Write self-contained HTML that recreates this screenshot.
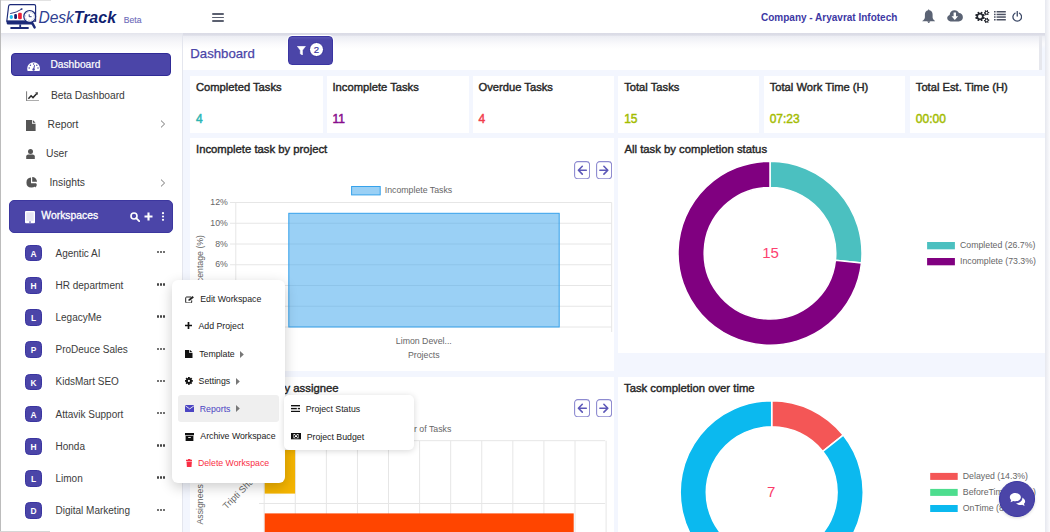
<!DOCTYPE html>
<html><head><meta charset="utf-8">
<style>
*{margin:0;padding:0;box-sizing:border-box}
html,body{width:1050px;height:532px;overflow:hidden;background:#fff;font-family:"Liberation Sans",sans-serif}
.a{position:absolute}
.t{position:absolute;white-space:nowrap;line-height:1}
#content{position:absolute;left:183px;top:33px;width:862px;height:499px;background:#f3f6fe}
.card{position:absolute;background:#fff}
.ct{position:absolute;white-space:nowrap;line-height:1;font-size:11.2px;color:#262626;-webkit-text-stroke:0.4px #262626}
.cv{position:absolute;white-space:nowrap;line-height:1;font-size:12px;-webkit-text-stroke:0.45px currentColor}
.side-t{position:absolute;white-space:nowrap;line-height:1;font-size:10.3px;color:#3a3a3a}
.av{position:absolute;left:25.2px;width:16.5px;height:16.5px;border-radius:4.5px;background:#4b45a8;border:0.8px solid #3a35a0;color:#fff;font-size:8.4px;font-weight:bold;text-align:center;line-height:17px}
.wt{position:absolute;left:55.5px;white-space:nowrap;line-height:1;font-size:10px;color:#3c3c3c}
.dots{position:absolute;left:156.5px;width:9px;height:3px}
.dots i{position:absolute;top:0;width:2.4px;height:2.4px;background:#444;border-radius:50%}
.mi{position:absolute;white-space:nowrap;line-height:1;font-size:8.75px;color:#222}
.lbl{position:absolute;white-space:nowrap;line-height:1;font-size:8.75px;color:#666}
.arrbtn{position:absolute;width:16px;height:18px;border:1.2px solid #8a86cc;border-radius:3px;background:#fff}
</style></head><body>

<!-- content background -->
<div id="content"></div>

<!-- header -->
<div class="a" style="left:0;top:0;width:1050px;height:33px;background:#fff;box-shadow:0 2px 4px rgba(40,40,80,0.10)"></div>
<div class="a" style="left:0;top:0;width:51px;height:1px;background:#e2e2e2"></div>

<div class="a" style="left:0;top:33px;width:183px;height:499px;background:#fff"></div>
<div class="a" style="left:1px;top:33px;width:181px;height:18px;background:linear-gradient(#e3e4ec,#eeeff4 4px,#f6f6f9 9px,rgba(255,255,255,0))"></div>
<div class="a" style="left:182px;top:33px;width:1px;height:499px;background:#e4e6ee"></div>
<div class="a" style="left:0;top:0;width:1px;height:532px;background:#bcbcbc"></div>
<div class="a" style="left:0;top:531px;width:50px;height:1px;background:#d6d6d6"></div>
<div class="a" style="left:11px;top:52.5px;width:159.8px;height:23px;border-radius:4px;background:#4b45a8;border:1px solid #302b96"></div>
<svg class="a" style="left:26.6px;top:61.6px" width="13.2" height="9.2" viewBox="0 0 13.2 9.2"><path d="M6.6 0.2A6.4 6.4 0 0 0 0.2 6.6c0 .9.2 1.8.5 2.6h11.8c.3-.8.5-1.7.5-2.6A6.4 6.4 0 0 0 6.6 0.2z" fill="#fff"/><circle cx="6.6" cy="2.1" r=".75" fill="#4b45a8"/><circle cx="3.4" cy="3.3" r=".75" fill="#4b45a8"/><circle cx="9.8" cy="3.3" r=".75" fill="#4b45a8"/><circle cx="2.2" cy="6.1" r=".75" fill="#4b45a8"/><circle cx="11" cy="6.1" r=".75" fill="#4b45a8"/><path d="M6.6 7.6L7.6 3.2" stroke="#4b45a8" stroke-width="1"/><circle cx="6.6" cy="7.5" r="1.2" fill="#4b45a8"/></svg>
<div class="t" style="left:50.5px;top:59.5px;font-size:10.2px;color:#fff;-webkit-text-stroke:0.2px #fff">Dashboard</div>
<svg class="a" style="left:26px;top:90.5px" width="13.2" height="10.5" viewBox="0 0 13.2 10.5"><path d="M0.6 0.3V9.9H13" fill="none" stroke="#777" stroke-width="1"/><path d="M2.4 7.8L5.1 4.8L7 6.6L10.6 2.8" fill="none" stroke="#2a2a2a" stroke-width="1.5"/><path d="M9.2 1.6L11.9 1.2L11.6 4z" fill="#2a2a2a"/></svg>
<div class="t side-t" style="left:51px;top:90.6px;letter-spacing:-0.05px">Beta Dashboard</div>
<svg class="a" style="left:25.8px;top:119.5px" width="10" height="11" viewBox="0 0 10 11"><path d="M0 0H6V3.8H9.6V11H0z" fill="#555"/><path d="M6.8 0L9.6 2.8H6.8z" fill="#555"/></svg>
<div class="t side-t" style="left:47.5px;top:119.6px">Report</div>
<svg class="a" style="left:160px;top:120px" width="6" height="8" viewBox="0 0 6 8"><path d="M1 0.6L4.6 4L1 7.4" fill="none" stroke="#777" stroke-width="1"/></svg>
<svg class="a" style="left:25.8px;top:148.8px" width="9" height="10" viewBox="0 0 9 10"><circle cx="4.5" cy="2.6" r="2.5" fill="#555"/><path d="M0.2 10V7.6C0.2 6.3 1.2 5.6 2.4 5.6H6.6C7.8 5.6 8.8 6.3 8.8 7.6V10z" fill="#555"/></svg>
<div class="t side-t" style="left:46px;top:148.9px">User</div>
<svg class="a" style="left:25.5px;top:177px" width="12" height="11" viewBox="0 0 12 11"><path d="M5 0.6A5 5 0 1 0 10.4 6.2H5z" fill="#555"/><path d="M6.2 0A4.8 4.8 0 0 1 11 4.8H6.2z" fill="#555"/><path d="M6.8 7.2H11A4.8 4.8 0 0 1 9.3 10.4z" fill="#555"/></svg>
<div class="t side-t" style="left:49.5px;top:178.3px">Insights</div>
<svg class="a" style="left:160px;top:178.5px" width="6" height="8" viewBox="0 0 6 8"><path d="M1 0.6L4.6 4L1 7.4" fill="none" stroke="#777" stroke-width="1"/></svg>
<div class="a" style="left:9.3px;top:199.8px;width:163.4px;height:32.9px;border-radius:5px;background:#4b45a8;border:0.8px solid #3c379f"></div>
<svg class="a" style="left:25.2px;top:211.3px" width="10" height="12.3" viewBox="0 0 10 12.3"><rect x="0" y="0" width="10" height="12.3" rx="1" fill="#fff"/><rect x="1.3" y="1.3" width="7.4" height="8.6" fill="#e6e5f4"/><rect x="4" y="10.6" width="2" height=".9" fill="#4b45a8"/></svg>
<div class="t" style="left:41.3px;top:211.4px;font-size:10.4px;color:#fff;-webkit-text-stroke:0.3px #fff">Workspaces</div>
<svg class="a" style="left:129.5px;top:212px" width="10" height="10" viewBox="0 0 10 10"><circle cx="4" cy="4" r="3" fill="none" stroke="#fff" stroke-width="1.6"/><path d="M6.2 6.2L9.2 9.2" stroke="#fff" stroke-width="1.8" stroke-linecap="round"/></svg>
<svg class="a" style="left:144.2px;top:212.2px" width="9" height="9" viewBox="0 0 9 9"><path d="M4.5 0.5V8.5M0.5 4.5H8.5" stroke="#fff" stroke-width="2.1"/></svg>
<svg class="a" style="left:161px;top:212px" width="4" height="9" viewBox="0 0 4 9"><circle cx="2" cy="1.2" r="1.1" fill="#fff"/><circle cx="2" cy="4.5" r="1.1" fill="#fff"/><circle cx="2" cy="7.8" r="1.1" fill="#fff"/></svg>
<div class="av" style="top:244.8px">A</div>
<div class="wt" style="top:248.6px">Agentic AI</div>
<div class="dots" style="top:251.0px"><i style="left:0"></i><i style="left:3.3px"></i><i style="left:6.6px"></i></div>
<div class="av" style="top:277.0px">H</div>
<div class="wt" style="top:280.8px">HR department</div>
<div class="dots" style="top:283.2px"><i style="left:0"></i><i style="left:3.3px"></i><i style="left:6.6px"></i></div>
<div class="av" style="top:309.2px">L</div>
<div class="wt" style="top:313.0px">LegacyMe</div>
<div class="dots" style="top:315.4px"><i style="left:0"></i><i style="left:3.3px"></i><i style="left:6.6px"></i></div>
<div class="av" style="top:341.4px">P</div>
<div class="wt" style="top:345.2px">ProDeuce Sales</div>
<div class="dots" style="top:347.6px"><i style="left:0"></i><i style="left:3.3px"></i><i style="left:6.6px"></i></div>
<div class="av" style="top:373.6px">K</div>
<div class="wt" style="top:377.4px">KidsMart SEO</div>
<div class="dots" style="top:379.8px"><i style="left:0"></i><i style="left:3.3px"></i><i style="left:6.6px"></i></div>
<div class="av" style="top:405.8px">A</div>
<div class="wt" style="top:409.6px">Attavik Support</div>
<div class="dots" style="top:412.0px"><i style="left:0"></i><i style="left:3.3px"></i><i style="left:6.6px"></i></div>
<div class="av" style="top:438.0px">H</div>
<div class="wt" style="top:441.8px">Honda</div>
<div class="dots" style="top:444.2px"><i style="left:0"></i><i style="left:3.3px"></i><i style="left:6.6px"></i></div>
<div class="av" style="top:470.2px">L</div>
<div class="wt" style="top:474.0px">Limon</div>
<div class="dots" style="top:476.4px"><i style="left:0"></i><i style="left:3.3px"></i><i style="left:6.6px"></i></div>
<div class="av" style="top:502.4px">D</div>
<div class="wt" style="top:506.2px">Digital Marketing</div>
<div class="dots" style="top:508.6px"><i style="left:0"></i><i style="left:3.3px"></i><i style="left:6.6px"></i></div>
<svg class="a" style="left:5px;top:3px" width="32" height="27" viewBox="5 3 32 27">
<path d="M10.4 4.6H34.2A1.5 1.5 0 0 1 35.6 6.1V21.2H6.8L8.6 6.1A1.8 1.8 0 0 1 10.4 4.6z" fill="#fff" stroke="#1c2a78" stroke-width="1.15"/>
<path d="M6.6 20.6H33V24.6H8.2A1.6 1.6 0 0 1 6.6 23z" fill="#1c2a78"/>
<rect x="19.3" y="24.4" width="1.8" height="2.9" fill="#1c2a78"/>
<rect x="10.2" y="27" width="18.7" height="1.9" rx=".9" fill="#1c2a78"/>
<path d="M10.2 13.6Q16.5 12.6 21.2 9.4" fill="none" stroke="#1c2a78" stroke-width="0.9"/>
<ellipse cx="21.6" cy="9.1" rx="1.1" ry=".8" fill="#1c2a78"/>
<ellipse cx="11.3" cy="17" rx="1.7" ry="1.9" fill="#1fbdf2"/>
<rect x="14.2" y="14.1" width="2.8" height="4.9" rx="1.3" fill="#1a1f6e"/>
<rect x="18.1" y="12.7" width="3.7" height="6.5" rx="1.3" fill="#ec2238"/>
<path d="M32 22.6L34.6 27.4" stroke="#1c2a78" stroke-width="2.4" stroke-linecap="round"/>
<circle cx="29.7" cy="16.4" r="5.9" fill="#fff" stroke="#1c2a78" stroke-width="1.2"/>
<circle cx="29.7" cy="16.4" r="4.4" fill="none" stroke="#1c2a78" stroke-width="0.45" stroke-dasharray="0.5 1.1"/>
<path d="M29.2 14.3V16.7H31.6" fill="none" stroke="#1c2a78" stroke-width="0.9"/>
</svg>
<div class="t" style="left:38.5px;top:10px;font-size:15.6px;font-style:italic;color:#2f3f92;letter-spacing:-0.1px">Desk<b style="color:#101f70;font-size:16px;letter-spacing:0">Track</b></div>
<div class="t" style="left:123.8px;top:16px;font-size:8.6px;color:#6b69b9;-webkit-text-stroke:0.1px #6b69b9">Beta</div>
<div class="a" style="left:211.5px;top:13.05px;width:12px;height:1.5px;background:#5b6070;border-radius:1px"></div>
<div class="a" style="left:211.5px;top:16.65px;width:12px;height:1.5px;background:#5b6070;border-radius:1px"></div>
<div class="a" style="left:211.5px;top:20.35px;width:12px;height:1.5px;background:#5b6070;border-radius:1px"></div>
<div class="t" style="left:761px;top:13px;font-size:10px;font-weight:bold;color:#3d38a4">Company - Aryavrat Infotech</div>
<svg class="a" style="left:921.8px;top:8.6px" width="13.5" height="14.8" viewBox="0 0 13.5 14.8"><path d="M6.75 0.1L7.4 1.2C9.6 1.6 10.6 3.4 10.6 5.6V8.2C10.6 9.6 11.6 10.9 13.2 12.1V12.3H0.3V12.1C1.9 10.9 2.9 9.6 2.9 8.2V5.6C2.9 3.4 3.9 1.6 6.1 1.2z" fill="#5b6374"/><path d="M5.2 12.2H8.3L6.75 14.6z" fill="#5b6374"/></svg>
<svg class="a" style="left:947.3px;top:10.2px" width="16" height="11.5" viewBox="0 0 16 11.5"><path d="M3.6 11.4C1.7 11.4 0.2 10 0.2 8.1c0-1.5 1-2.8 2.4-3.2C2.8 2.3 4.9 0.2 7.6 0.2c2 0 3.6 1.1 4.4 2.8 2.2.1 3.9 1.9 3.9 4.2 0 2.3-1.9 4.2-4.2 4.2z" fill="#5b6374"/><path d="M6.6 2.6h2.4v3.6h2.1L7.8 9.9 4.5 6.2h2.1z" fill="#fff"/></svg>
<svg class="a" style="left:975.2px;top:9.9px" width="14.5" height="13.2" viewBox="0 0 14.5 13.2"><circle cx="5.0" cy="6.5" r="3.6" fill="#23262e"/><rect x="4.25" y="1.80" width="1.5" height="9.40" fill="#23262e" transform="rotate(22.5 5.0 6.5)"/><rect x="4.25" y="1.80" width="1.5" height="9.40" fill="#23262e" transform="rotate(67.5 5.0 6.5)"/><rect x="4.25" y="1.80" width="1.5" height="9.40" fill="#23262e" transform="rotate(112.5 5.0 6.5)"/><rect x="4.25" y="1.80" width="1.5" height="9.40" fill="#23262e" transform="rotate(157.5 5.0 6.5)"/><rect x="4.25" y="1.80" width="1.5" height="9.40" fill="#23262e" transform="rotate(202.5 5.0 6.5)"/><rect x="4.25" y="1.80" width="1.5" height="9.40" fill="#23262e" transform="rotate(247.5 5.0 6.5)"/><rect x="4.25" y="1.80" width="1.5" height="9.40" fill="#23262e" transform="rotate(292.5 5.0 6.5)"/><rect x="4.25" y="1.80" width="1.5" height="9.40" fill="#23262e" transform="rotate(337.5 5.0 6.5)"/><circle cx="5.0" cy="6.5" r="1.9" fill="#fff"/><circle cx="11.6" cy="2.7" r="1.9" fill="#23262e"/><rect x="11.15" y="0.10" width="0.9" height="5.20" fill="#23262e" transform="rotate(22.5 11.6 2.7)"/><rect x="11.15" y="0.10" width="0.9" height="5.20" fill="#23262e" transform="rotate(82.5 11.6 2.7)"/><rect x="11.15" y="0.10" width="0.9" height="5.20" fill="#23262e" transform="rotate(142.5 11.6 2.7)"/><rect x="11.15" y="0.10" width="0.9" height="5.20" fill="#23262e" transform="rotate(202.5 11.6 2.7)"/><rect x="11.15" y="0.10" width="0.9" height="5.20" fill="#23262e" transform="rotate(262.5 11.6 2.7)"/><rect x="11.15" y="0.10" width="0.9" height="5.20" fill="#23262e" transform="rotate(322.5 11.6 2.7)"/><circle cx="11.6" cy="2.7" r="0.95" fill="#fff"/><circle cx="11.6" cy="10.4" r="1.9" fill="#23262e"/><rect x="11.15" y="7.80" width="0.9" height="5.20" fill="#23262e" transform="rotate(22.5 11.6 10.4)"/><rect x="11.15" y="7.80" width="0.9" height="5.20" fill="#23262e" transform="rotate(82.5 11.6 10.4)"/><rect x="11.15" y="7.80" width="0.9" height="5.20" fill="#23262e" transform="rotate(142.5 11.6 10.4)"/><rect x="11.15" y="7.80" width="0.9" height="5.20" fill="#23262e" transform="rotate(202.5 11.6 10.4)"/><rect x="11.15" y="7.80" width="0.9" height="5.20" fill="#23262e" transform="rotate(262.5 11.6 10.4)"/><rect x="11.15" y="7.80" width="0.9" height="5.20" fill="#23262e" transform="rotate(322.5 11.6 10.4)"/><circle cx="11.6" cy="10.4" r="0.95" fill="#fff"/></svg>
<svg class="a" style="left:994.4px;top:11px" width="12" height="9.5" viewBox="0 0 12 9.5"><g fill="#4c5263"><rect x="0" y="0" width="1.6" height="1.5"/><rect x="0" y="2.7" width="1.6" height="1.5"/><rect x="0" y="5.3" width="1.6" height="1.5"/><rect x="0" y="8" width="1.6" height="1.5"/><rect x="2.6" y="0" width="9.2" height="1.5"/><rect x="2.6" y="2.7" width="9.2" height="1.5"/><rect x="2.6" y="5.3" width="9.2" height="1.5"/><rect x="2.6" y="8" width="9.2" height="1.5"/></g></svg>
<svg class="a" style="left:1011.9px;top:11.4px" width="10.5" height="10.5" viewBox="0 0 10.5 10.5"><path d="M3 2.2A4.3 4.3 0 1 0 7.5 2.2" fill="none" stroke="#3b4866" stroke-width="1.3" stroke-linecap="round"/><path d="M5.25 0.6V5" stroke="#3b4866" stroke-width="1.3" stroke-linecap="round"/></svg>
<div class="a" style="left:183px;top:33px;width:856px;height:37.4px;background:#fff"></div>
<div class="a" style="left:183px;top:33px;width:862px;height:16px;background:linear-gradient(#dadbe6,#dcdde7 2.2px,#ecedf3 3.2px,#f3f4f8 7px,#fafafc 11px,rgba(255,255,255,0))"></div>
<div class="a" style="left:1039px;top:36px;width:3px;height:34.4px;background:#e6e7ed"></div>
<div class="t" style="left:190.3px;top:46.5px;font-size:13.2px;color:#4b45a8;-webkit-text-stroke:0.25px #4b45a8">Dashboard</div>
<div class="a" style="left:287.5px;top:35.6px;width:45.5px;height:29px;border-radius:4px;background:linear-gradient(#5a55b2,#4b45a8 3px);border:1px solid #3a35a2;box-shadow:0 0 0 1px #fff"></div>
<svg class="a" style="left:296.8px;top:45.6px" width="8.8" height="9.5" viewBox="0 0 8.8 9.5"><path d="M0.3 0.3H8.5L5.5 4.2V9.2L3.3 7.8V4.2z" fill="#fff" stroke="#fff" stroke-width="0.5" stroke-linejoin="round"/></svg>
<div class="a" style="left:308.5px;top:41.5px;width:15.7px;height:15.7px;border-radius:50%;background:#fff;border:1px solid #2f2a96"></div>
<div class="t" style="left:308.5px;top:45.3px;width:15.7px;text-align:center;font-size:9.6px;color:#3b35a0;-webkit-text-stroke:0.2px #3b35a0">2</div>
<div class="card" style="left:190px;top:76.3px;width:132.5px;height:56.4px"></div>
<div class="t ct" style="left:196.0px;top:82.1px">Completed Tasks</div>
<div class="t cv" style="left:196.0px;top:113px;color:#2cb5b3">4</div>
<div class="card" style="left:326.5px;top:76.3px;width:142.1px;height:56.4px"></div>
<div class="t ct" style="left:332.5px;top:82.1px">Incomplete Tasks</div>
<div class="t cv" style="left:332.5px;top:113px;color:#870b8c">11</div>
<div class="card" style="left:472.5px;top:76.3px;width:141.4px;height:56.4px"></div>
<div class="t ct" style="left:478.5px;top:82.1px">Overdue Tasks</div>
<div class="t cv" style="left:478.5px;top:113px;color:#f23d4c">4</div>
<div class="card" style="left:618.2px;top:76.3px;width:141.3px;height:56.4px"></div>
<div class="t ct" style="left:624.2px;top:82.1px">Total Tasks</div>
<div class="t cv" style="left:624.2px;top:113px;color:#a3bc00">15</div>
<div class="card" style="left:763.7px;top:76.3px;width:141.5px;height:56.4px"></div>
<div class="t ct" style="left:769.7px;top:82.1px">Total Work Time (H)</div>
<div class="t cv" style="left:769.7px;top:113px;color:#a3bc00">07:23</div>
<div class="card" style="left:909.8px;top:76.3px;width:135.4px;height:56.4px"></div>
<div class="t ct" style="left:915.8px;top:82.1px">Total Est. Time (H)</div>
<div class="t cv" style="left:915.8px;top:113px;color:#a3bc00">00:00</div>
<div class="card" style="left:190px;top:138.3px;width:424px;height:232.5px"></div>
<div class="card" style="left:618px;top:138.3px;width:427.2px;height:214.3px"></div>
<div class="card" style="left:190px;top:376.8px;width:424px;height:160px"></div>
<div class="card" style="left:618px;top:376.8px;width:427.2px;height:160px"></div>
<div class="t ct" style="left:196px;top:143.7px;font-size:11.3px">Incomplete task by project</div>
<div class="t ct" style="left:624.5px;top:143.7px;font-size:11.3px">All task by completion status</div>
<div class="t ct" style="left:196px;top:382.5px;font-size:11.3px">Incomplete task by assignee</div>
<div class="t ct" style="left:624px;top:382.5px;font-size:11.3px">Task completion over time</div>
<svg class="a" style="left:573.6px;top:160.8px" width="16.2" height="18.3" viewBox="0 0 16.2 18.3"><rect x="0.6" y="0.6" width="15" height="17.1" rx="3.2" fill="#fff" stroke="#8d8ad0" stroke-width="1.1"/><path d="M12.3 9.2H4.6M8.3 5.3L4.4 9.2L8.3 13.1" fill="none" stroke="#5d58b8" stroke-width="1.6" stroke-linecap="round" stroke-linejoin="round"/></svg>
<svg class="a" style="left:595.6px;top:160.8px" width="16.2" height="18.3" viewBox="0 0 16.2 18.3"><rect x="0.6" y="0.6" width="15" height="17.1" rx="3.2" fill="#fff" stroke="#8d8ad0" stroke-width="1.1"/><path d="M3.9 9.2H11.6M7.9 5.3L11.8 9.2L7.9 13.1" fill="none" stroke="#5d58b8" stroke-width="1.6" stroke-linecap="round" stroke-linejoin="round"/></svg>
<svg class="a" style="left:573.6px;top:399.2px" width="16.2" height="18.3" viewBox="0 0 16.2 18.3"><rect x="0.6" y="0.6" width="15" height="17.1" rx="3.2" fill="#fff" stroke="#8d8ad0" stroke-width="1.1"/><path d="M12.3 9.2H4.6M8.3 5.3L4.4 9.2L8.3 13.1" fill="none" stroke="#5d58b8" stroke-width="1.6" stroke-linecap="round" stroke-linejoin="round"/></svg>
<svg class="a" style="left:595.6px;top:399.2px" width="16.2" height="18.3" viewBox="0 0 16.2 18.3"><rect x="0.6" y="0.6" width="15" height="17.1" rx="3.2" fill="#fff" stroke="#8d8ad0" stroke-width="1.1"/><path d="M3.9 9.2H11.6M7.9 5.3L11.8 9.2L7.9 13.1" fill="none" stroke="#5d58b8" stroke-width="1.6" stroke-linecap="round" stroke-linejoin="round"/></svg>
<svg class="a" style="left:0;top:0" width="1050" height="532" viewBox="0 0 1050 532">
<path d="M230 202.50H611.7" stroke="#e6e6e6" stroke-width="1"/>
<path d="M230 223.25H611.7" stroke="#e6e6e6" stroke-width="1"/>
<path d="M230 244.00H611.7" stroke="#e6e6e6" stroke-width="1"/>
<path d="M230 264.75H611.7" stroke="#e6e6e6" stroke-width="1"/>
<path d="M230 285.50H611.7" stroke="#e6e6e6" stroke-width="1"/>
<path d="M230 306.25H611.7" stroke="#e6e6e6" stroke-width="1"/>
<path d="M230 327.00H611.7" stroke="#e6e6e6" stroke-width="1"/>
<path d="M235.8 202.5V332M611.7 202.5V332" stroke="#e6e6e6" stroke-width="1"/>
<rect x="288.8" y="213.3" width="270.4" height="113.7" fill="rgba(54,162,235,0.5)" stroke="#36a2eb" stroke-width="1"/>
<rect x="351.6" y="186.5" width="28.6" height="8.4" fill="rgba(54,162,235,0.5)" stroke="#36a2eb" stroke-width="1"/>
<path d="M264.20 440.7V532" stroke="#e6e6e6" stroke-width="1"/>
<path d="M295.28 440.7V532" stroke="#e6e6e6" stroke-width="1"/>
<path d="M326.36 440.7V532" stroke="#e6e6e6" stroke-width="1"/>
<path d="M357.44 440.7V532" stroke="#e6e6e6" stroke-width="1"/>
<path d="M388.52 440.7V532" stroke="#e6e6e6" stroke-width="1"/>
<path d="M419.60 440.7V532" stroke="#e6e6e6" stroke-width="1"/>
<path d="M450.68 440.7V532" stroke="#e6e6e6" stroke-width="1"/>
<path d="M481.76 440.7V532" stroke="#e6e6e6" stroke-width="1"/>
<path d="M512.84 440.7V532" stroke="#e6e6e6" stroke-width="1"/>
<path d="M543.92 440.7V532" stroke="#e6e6e6" stroke-width="1"/>
<path d="M575.00 440.7V532" stroke="#e6e6e6" stroke-width="1"/>
<path d="M606.08 440.7V532" stroke="#e6e6e6" stroke-width="1"/>
<path d="M259 440.7H605.2" stroke="#e6e6e6" stroke-width="1"/>
<path d="M259 503.5H605.2" stroke="#e6e6e6" stroke-width="1"/>
<rect x="264.7" y="450" width="30.4" height="43.6" fill="#f4b400"/>
<rect x="264.7" y="513.4" width="309" height="45" fill="#ff4500"/>
<rect x="352.6" y="425.2" width="28.6" height="8.4" fill="#ff4500"/>
<path d="M770.00 161.20A92.00 92.00 0 0 1 861.48 263.01L835.42 260.22A65.80 65.80 0 0 0 770.00 187.40Z" fill="#4bc0c0" stroke="#fff" stroke-width="1.5"/>
<path d="M861.48 263.01A92.00 92.00 0 1 1 770.00 161.20L770.00 187.40A65.80 65.80 0 1 0 835.42 260.22Z" fill="#800080" stroke="#fff" stroke-width="1.5"/>
<path d="M771.70 400.70A91.50 91.50 0 0 1 843.24 435.15L822.83 451.43A65.40 65.40 0 0 0 771.70 426.80Z" fill="#f45656" stroke="#fff" stroke-width="1.5"/>
<path d="M843.24 435.15A91.50 91.50 0 1 1 771.70 400.70L771.70 426.80A65.40 65.40 0 1 0 822.83 451.43Z" fill="#0bb9ef" stroke="#fff" stroke-width="1.5"/>
<rect x="927.1" y="242" width="27.8" height="7.3" fill="#4bc0c0"/>
<rect x="927.1" y="258" width="27.8" height="7.3" fill="#800080"/>
<rect x="930.2" y="472.9" width="27.5" height="7" fill="#f45656"/>
<rect x="930.2" y="488.9" width="27.5" height="7" fill="#4ddd8e"/>
<rect x="930.2" y="505" width="27.5" height="7" fill="#0bb9ef"/>
</svg>
<div class="lbl" style="left:384.8px;top:186.4px;">Incomplete Tasks</div>
<div class="lbl" style="right:822.2px;top:198.1px;">12%</div>
<div class="lbl" style="right:822.2px;top:218.9px;">10%</div>
<div class="lbl" style="right:822.2px;top:239.6px;">8%</div>
<div class="lbl" style="right:822.2px;top:260.4px;">6%</div>
<div class="lbl" style="right:822.2px;top:281.2px;">4%</div>
<div class="lbl" style="right:822.2px;top:302.0px;">2%</div>
<div class="lbl" style="right:822.2px;top:322.8px;">0%</div>
<div class="lbl" style="left:363.8px;width:120px;text-align:center;top:336.8px;">Limon Devel...</div>
<div class="lbl" style="left:363.8px;width:120px;text-align:center;top:351.3px;">Projects</div>
<div class="lbl" style="left:140px;top:260.5px;width:120px;text-align:center;transform:rotate(-90deg)">Percentage (%)</div>
<div class="lbl" style="left:385.8px;top:425.1px;">Number of Tasks</div>
<div class="lbl" style="left:140px;top:500px;width:120px;text-align:center;transform:rotate(-90deg)">Assignees</div>
<div class="lbl" style="left:228px;top:502px;font-size:9.2px;transform:rotate(-45deg);transform-origin:0 100%">Tripti Shar...</div>
<div class="lbl" style="left:960.0px;top:241.1px;">Completed (26.7%)</div>
<div class="lbl" style="left:960.0px;top:257.1px;">Incomplete (73.3%)</div>
<div class="lbl" style="left:962.8px;top:472.2px;">Delayed (14.3%)</div>
<div class="lbl" style="left:962.8px;top:488.2px;">BeforeTime (0.0%)</div>
<div class="lbl" style="left:962.8px;top:504.3px;">OnTime (85.7%)</div>
<div class="t" style="left:720.5px;top:244.8px;width:100px;text-align:center;font-size:15px;color:#fd416f">15</div>
<div class="t" style="left:721.2px;top:483.7px;width:100px;text-align:center;font-size:15px;color:#fb3a68">7</div>
<!-- right vertical shadow strip -->
<div class="a" style="left:172.1px;top:280.3px;width:113.2px;height:202.7px;border-radius:6px;background:#fff;box-shadow:0 4px 13px rgba(0,0,0,0.2)"></div>
<div class="a" style="left:178.4px;top:395px;width:101.1px;height:27.1px;border-radius:3px;background:#efefef"></div>
<div class="mi" style="left:200.2px;top:295.0px;color:#222">Edit Workspace</div>
<div class="mi" style="left:198.5px;top:322.4px;color:#222">Add Project</div>
<div class="mi" style="left:199.2px;top:349.8px;color:#222">Template</div>
<div class="mi" style="left:198.6px;top:377.2px;color:#222">Settings</div>
<div class="mi" style="left:199.8px;top:404.6px;color:#4b45c3">Reports</div>
<div class="mi" style="left:200.3px;top:432.0px;color:#222">Archive Workspace</div>
<div class="mi" style="left:197.9px;top:459.4px;color:#f92f45">Delete Workspace</div>
<svg class="a" style="left:185px;top:295.5px" width="9.5" height="7.5" viewBox="0 0 9.5 7.5"><path d="M6.2 1H1.6A.9.9 0 0 0 .7 1.9V6.1A.9.9 0 0 0 1.6 7H5.8A.9.9 0 0 0 6.7 6.1V4.4" fill="none" stroke="#222" stroke-width="1"/><path d="M3.4 4.9L3.8 3.3L7.6 .1L8.9 1.4L5.1 4.6z" fill="#222"/></svg>
<svg class="a" style="left:185.3px;top:322.3px" width="7" height="7" viewBox="0 0 7 7"><path d="M3.5 0V7M0 3.5H7" stroke="#111" stroke-width="1.7"/></svg>
<svg class="a" style="left:185.3px;top:349.8px" width="7.5" height="8.2" viewBox="0 0 7.5 8.2"><path d="M0 0H4.3V2.9H7.5V8.2H0z" fill="#111"/><path d="M5 0L7.5 2.3H5z" fill="#111"/></svg>
<svg class="a" style="left:185px;top:377.2px" width="7.8" height="7.8" viewBox="-3.9 -3.9 7.8 7.8"><g fill="#111"><circle r="2.7"/><rect x="-0.9" y="-3.9" width="1.8" height="7.8"/><rect x="-0.9" y="-3.9" width="1.8" height="7.8" transform="rotate(45)"/><rect x="-0.9" y="-3.9" width="1.8" height="7.8" transform="rotate(90)"/><rect x="-0.9" y="-3.9" width="1.8" height="7.8" transform="rotate(135)"/></g><circle r="1.1" fill="#fff"/></svg>
<svg class="a" style="left:185px;top:405.4px" width="9.4" height="7.1" viewBox="0 0 9.4 7.1"><rect x="0" y="0" width="9.4" height="7.1" rx=".8" fill="#4b45c3"/><path d="M.4 .8L4.7 3.9L9 .8" fill="none" stroke="#efefef" stroke-width=".9"/></svg>
<svg class="a" style="left:185px;top:432.5px" width="9" height="8.2" viewBox="0 0 9 8.2"><rect x="0" y="0" width="9" height="2.3" fill="#111"/><path d="M.6 2.9H8.4V8.2H.6z" fill="#111"/><rect x="3.2" y="4" width="2.6" height=".9" fill="#fff"/></svg>
<svg class="a" style="left:185.7px;top:459px" width="6.4" height="8.3" viewBox="0 0 6.4 8.3"><path d="M2.2 0H4.2L4.6 .8H6.4V1.9H0V.8H1.8z" fill="#f92f45"/><path d="M.5 2.5H5.9L5.5 8.3H.9z" fill="#f92f45"/></svg>
<svg class="a" style="left:240.2px;top:350.5px" width="4" height="7" viewBox="0 0 4 7"><path d="M0 0L3.8 3.5L0 7z" fill="#777"/></svg>
<svg class="a" style="left:236px;top:377.8px" width="4" height="7" viewBox="0 0 4 7"><path d="M0 0L3.8 3.5L0 7z" fill="#777"/></svg>
<svg class="a" style="left:236px;top:405.2px" width="4" height="7" viewBox="0 0 4 7"><path d="M0 0L3.8 3.5L0 7z" fill="#777"/></svg>
<div class="a" style="left:283.6px;top:395.3px;width:130px;height:54.7px;border-radius:5px;background:#fff;box-shadow:0 1px 6px rgba(0,0,0,0.16)"></div>
<div class="mi" style="left:305.7px;top:404.6px">Project Status</div>
<div class="mi" style="left:306.7px;top:432.9px">Project Budget</div>
<svg class="a" style="left:290.7px;top:405px" width="9.3" height="7.2" viewBox="0 0 9.3 7.2"><g fill="#111"><rect x="0" y="0" width="9.3" height="1.4"/><rect x="0" y="2.9" width="5.8" height="1.4"/><rect x="6.8" y="2.9" width="2.5" height="1.4"/><rect x="0" y="5.8" width="9.3" height="1.4"/></g></svg>
<svg class="a" style="left:290.7px;top:433.3px" width="10" height="6.3" viewBox="0 0 10 6.3"><rect x=".5" y=".5" width="9" height="5.3" fill="none" stroke="#111" stroke-width="1"/><rect x=".5" y=".5" width="2" height="5.3" fill="#111"/><rect x="7.5" y=".5" width="2" height="5.3" fill="#111"/><circle cx="5" cy="3.15" r="1.6" fill="none" stroke="#111" stroke-width="1"/></svg>
<div class="a" style="left:999.2px;top:481.2px;width:36px;height:36px;border-radius:50%;background:#4b45a8;border:1px solid #3b36a2;box-shadow:0 1px 3px rgba(0,0,0,0.15)"></div>
<svg class="a" style="left:1008.6px;top:492.4px" width="17" height="14.5" viewBox="0 0 20 17"><path d="M7.5 1C3.9 1 1 3.2 1 6c0 1.3.6 2.4 1.6 3.3L1.8 12l3.3-1.4c.7.2 1.5.3 2.4.3 3.6 0 6.5-2.2 6.5-4.9S11.1 1 7.5 1z" fill="#fff"/><path d="M15.2 6.4c.1.3.1.5.1.8 0 3.2-3.2 5.5-7 5.7.9 1.5 2.9 2.5 5.2 2.5.7 0 1.3-.1 1.9-.3l2.9 1.2-.7-2.4c.9-.8 1.4-1.8 1.4-2.9 0-1.9-1.5-3.6-3.8-4.6z" fill="#fff"/><path d="M15.2 6.4c.1.3.1.5.1.8 0 3.2-3.2 5.5-7 5.7" fill="none" stroke="#4b45a8" stroke-width="0.9"/></svg>
<div class="a" style="left:1045px;top:0;width:5px;height:532px;background:linear-gradient(to right,#e6e8ef,#fbfbfd)"></div>

</body></html>
